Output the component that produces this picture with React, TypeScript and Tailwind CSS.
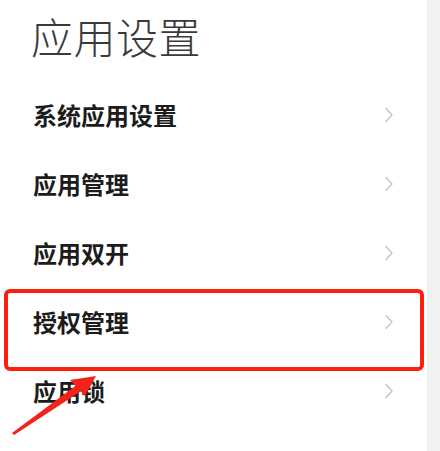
import React from "react";

const items = ["系统应用设置", "应用管理", "应用双开", "授权管理", "应用锁"];

function Chevron() {
  return (
    <svg width="10" height="16" viewBox="0 0 10 16" className="shrink-0">
      <path d="M2 1.5 L8 8 L2 14.5" fill="none" stroke="#c4c4c4" strokeWidth="1.4" strokeLinecap="round" strokeLinejoin="round" />
    </svg>
  );
}

export default function App() {
  return (
    <div
      className="relative flex w-[440px] h-[451px] overflow-hidden bg-white"
      style={{ fontFamily: '"Noto Sans CJK SC", "Noto Sans", sans-serif' }}
    >
      <div className="flex flex-col w-[427px] bg-white">
        <div className="h-[80px] pl-[31px] pt-[15px]">
          <div className="text-[42px] leading-[42px] font-light text-[#3a3a3a] tracking-[0.5px]">应用设置</div>
        </div>
        {items.map((t) => (
          <div key={t} className="h-[69px] flex items-center justify-between pl-[33px] pr-[33px]">
            <span className="text-[24px] leading-none font-bold text-[#1c1c1c]">{t}</span>
            <Chevron />
          </div>
        ))}
      </div>
      <div className="flex-1 bg-[#f2f2f2]" />
      <div className="absolute left-[4px] top-[289px] w-[420px] h-[82px] border-4 border-[#fb1f10] rounded-[6px]" />
      <svg className="absolute left-0 top-0" width="440" height="451" viewBox="0 0 440 451">
        <polygon points="12,433 82,381 86,388 14,435" fill="#f4231a" />
        <polygon points="96,376 70,380 85,396" fill="#f4231a" />
      </svg>
    </div>
  );
}
